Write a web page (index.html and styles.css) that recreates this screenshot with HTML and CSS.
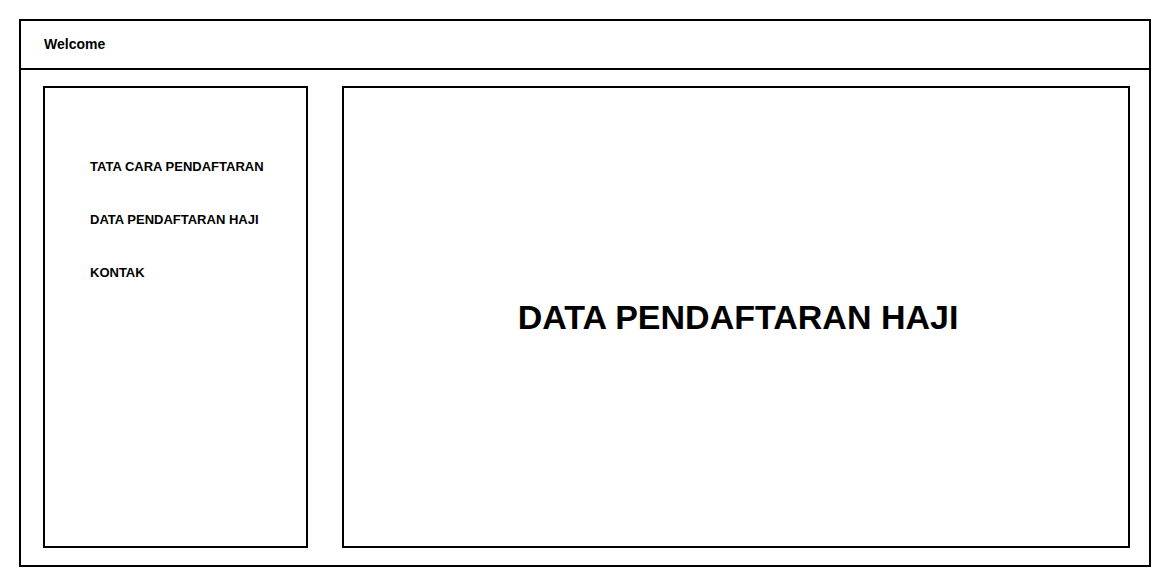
FILE: index.html
```html
<!DOCTYPE html>
<html lang="id">
<head>
  <meta charset="utf-8">
  <meta name="viewport" content="width=device-width, initial-scale=1">
  <title>Data Pendaftaran Haji</title>
  <link rel="stylesheet" href="styles.css">
</head>
<body>
  <div class="frame">
    <header class="topbar">Welcome</header>
    <div class="layout">
      <nav class="sidebar">
        <ul class="menu">
          <li><a href="#tata-cara">TATA CARA PENDAFTARAN</a></li>
          <li><a href="#data">DATA PENDAFTARAN HAJI</a></li>
          <li><a href="#kontak">KONTAK</a></li>
        </ul>
      </nav>
      <main class="content" id="data">
        <h1 class="title">DATA PENDAFTARAN HAJI</h1>
      </main>
    </div>
  </div>
</body>
</html>
```
FILE: styles.css
```css
* {
  box-sizing: border-box;
}

body {
  margin: 0;
  padding: 19px 19px 18px;
  min-height: 100vh;
  display: flex;
  background: #fff;
  color: #000;
  font: bold 14px/17px "Liberation Sans", Arial, sans-serif;
}

.frame {
  flex: 1;
  display: flex;
  flex-direction: column;
  border: 2px solid #000;
}

.topbar {
  padding: 15px 23px;
  border-bottom: 2px solid #000;
}

.layout {
  flex: 1;
  display: grid;
  grid-template-columns: 265px 1fr;
  gap: 34px;
  padding: 16px 19px 17px 22px;
}

.sidebar,
.content {
  border: 2px solid #000;
}

.sidebar {
  padding: 70px 45px;
}

.menu {
  margin: 0;
  padding: 0;
  list-style: none;
  display: grid;
  gap: 36px;
  font-size: 13px;
  white-space: nowrap;
}

.menu a {
  color: inherit;
  text-decoration: none;
}

.content {
  display: grid;
  place-items: center;
  padding-left: 4px;
}

.title {
  margin: 0;
  font-size: 34px;
  line-height: 44px;
}
```
